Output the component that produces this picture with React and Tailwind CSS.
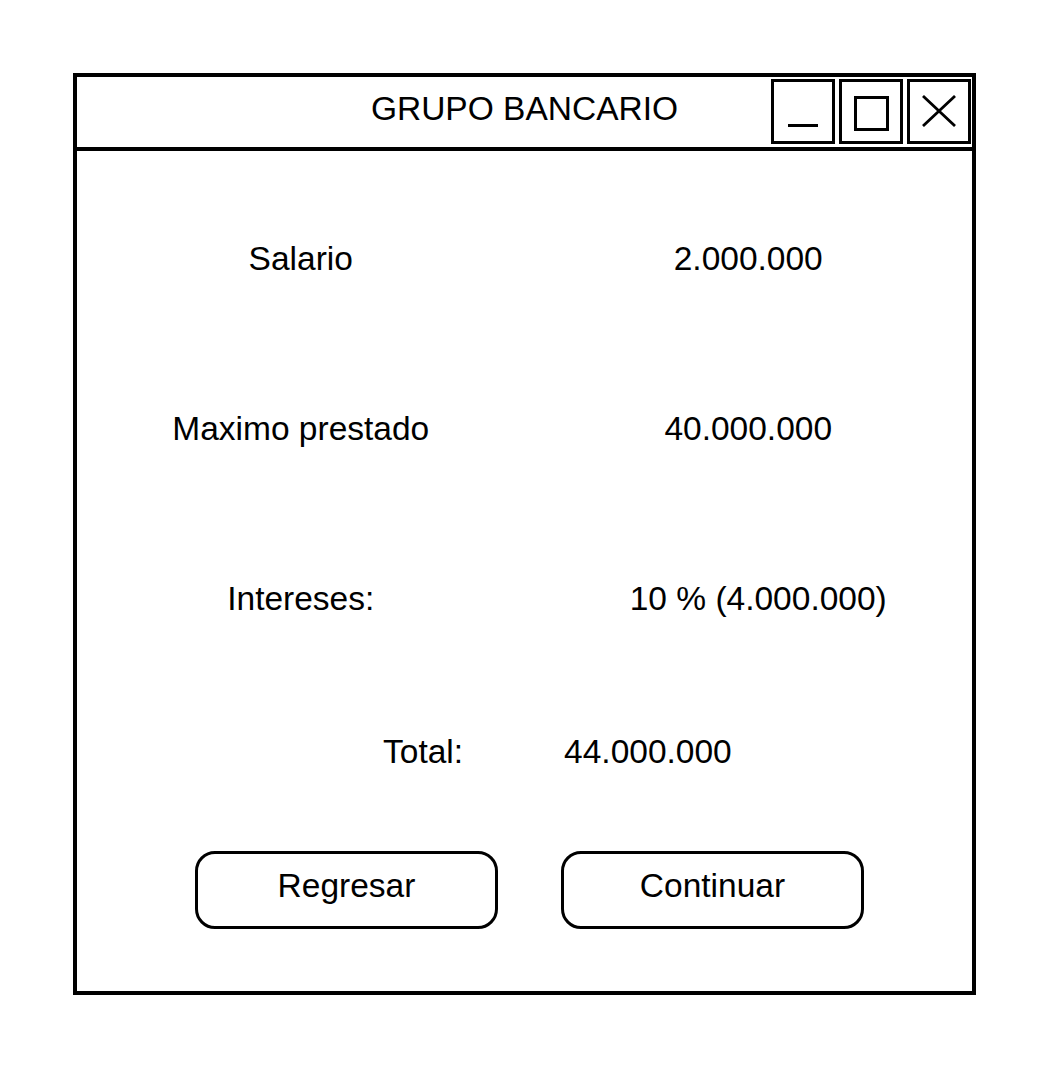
import React from 'react';

const ROWS = [
  { label: 'Salario', value: '2.000.000', shift: '' },
  { label: 'Maximo prestado', value: '40.000.000', shift: '' },
  { label: 'Intereses:', value: '10 % (4.000.000)', shift: 'pl-[20px]' },
];

function WinButton({ children }) {
  return (
    <div className="w-[64px] h-[65px] border-[3px] border-black flex items-center justify-center">
      {children}
    </div>
  );
}

export default function App() {
  return (
    <div className="w-[1059px] h-[1069px] bg-white pt-[73px] pl-[73px] text-black font-['Liberation_Sans',Arial,sans-serif]">
      <div className="w-[903px] h-[922px] border-4 border-black flex flex-col">
        {/* title bar */}
        <div className="h-[74px] shrink-0 border-b-4 border-black grid grid-cols-[1fr_auto_1fr] items-center">
          <div />
          <div className="text-[33.5px] leading-none pb-[6px] whitespace-nowrap">GRUPO BANCARIO</div>
          <div className="flex justify-end items-start h-full pt-[2px] pr-[1px] gap-[4px]">
            <WinButton>
              <span className="w-[30px] h-[3px] bg-black mt-[28px]" />
            </WinButton>
            <WinButton>
              <span className="w-[35px] h-[35px] border-[3px] border-black mt-[4px]" />
            </WinButton>
            <WinButton>
              <svg width="34" height="32" viewBox="0 0 34 32" className="-mt-[2px]">
                <path d="M1 1 L33 31 M33 1 L1 31" stroke="black" strokeWidth="2.8" fill="none" />
              </svg>
            </WinButton>
          </div>
        </div>

        {/* body */}
        <div className="flex flex-col pt-[23px]">
          {ROWS.map((r) => (
            <div key={r.label} className="h-[170px] grid grid-cols-2 items-center text-[33.5px] leading-none">
              <div className="text-center">{r.label}</div>
              <div className={`text-center ${r.shift}`}>{r.value}</div>
            </div>
          ))}

          <div className="h-[136px] flex items-center pl-[306px] text-[33.5px] leading-none">
            <span>Total:</span>
            <span className="ml-[101px]">44.000.000</span>
          </div>

          <div className="mt-[31px] flex pl-[118px] gap-[63px]">
            <button className="w-[303px] h-[78px] border-[3px] border-black rounded-[20px] flex items-center justify-center pb-2 text-[33.5px] leading-none">
              Regresar
            </button>
            <button className="w-[303px] h-[78px] border-[3px] border-black rounded-[20px] flex items-center justify-center pb-2 text-[33.5px] leading-none">
              Continuar
            </button>
          </div>
        </div>
      </div>
    </div>
  );
}
